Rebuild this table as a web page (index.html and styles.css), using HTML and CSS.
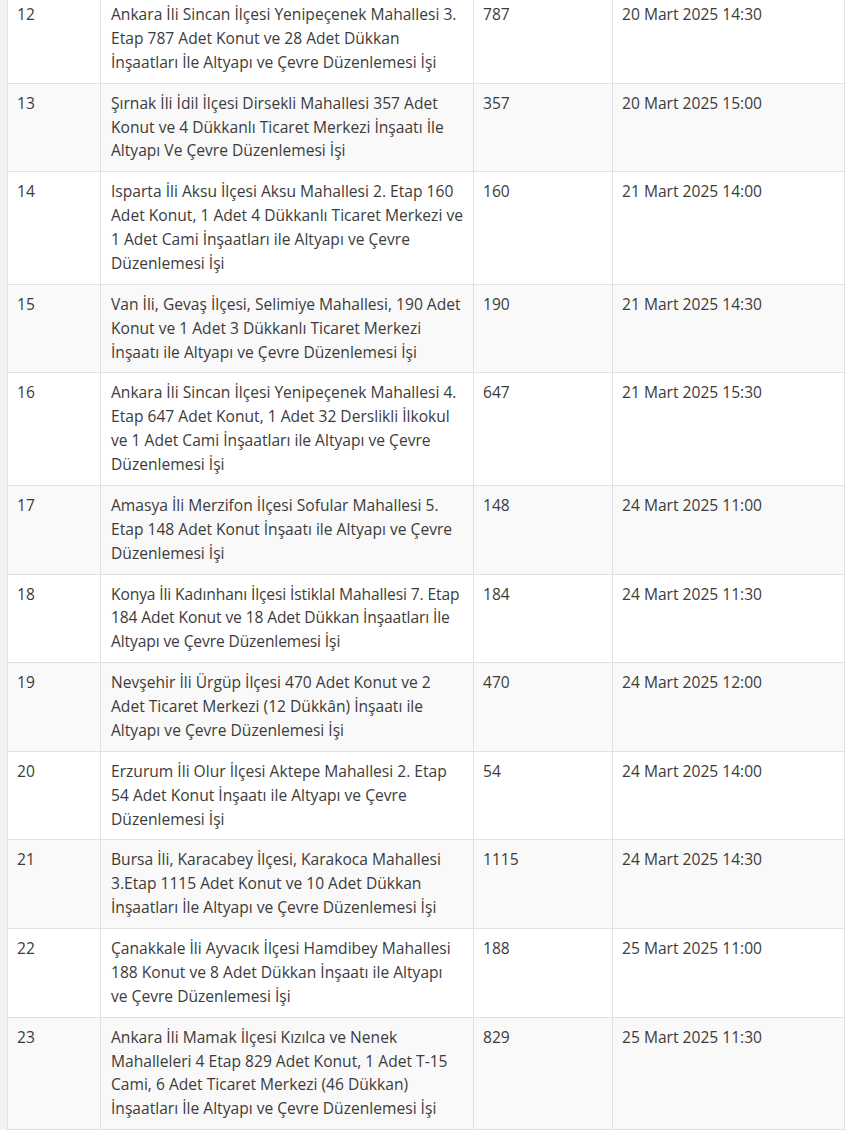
FILE: index.html
```html
<!DOCTYPE html>
<html lang="tr">
<head>
<meta charset="utf-8">
<title>İhale Listesi</title>
<link rel="stylesheet" href="styles.css">
</head>
<body>
<div class="page">
  <div class="gutter"></div>
  <table class="tenders">
    <colgroup>
      <col class="c-no"><col class="c-name"><col class="c-qty"><col class="c-date">
    </colgroup>
    <tbody>
      <tr><td>12</td><td>Ankara İli Sincan İlçesi Yenipeçenek Mahallesi 3. Etap 787 Adet Konut ve 28 Adet Dükkan İnşaatları İle Altyapı ve Çevre Düzenlemesi İşi</td><td>787</td><td>20 Mart 2025 14:30</td></tr>
      <tr><td>13</td><td>Şırnak İli İdil İlçesi Dirsekli Mahallesi 357 Adet Konut ve 4 Dükkanlı Ticaret Merkezi İnşaatı İle Altyapı Ve Çevre Düzenlemesi İşi</td><td>357</td><td>20 Mart 2025 15:00</td></tr>
      <tr><td>14</td><td>Isparta İli Aksu İlçesi Aksu Mahallesi 2. Etap 160 Adet Konut, 1 Adet 4 Dükkanlı Ticaret Merkezi ve 1 Adet Cami İnşaatları ile Altyapı ve Çevre Düzenlemesi İşi</td><td>160</td><td>21 Mart 2025 14:00</td></tr>
      <tr><td>15</td><td>Van İli, Gevaş İlçesi, Selimiye Mahallesi, 190 Adet Konut ve 1 Adet 3 Dükkanlı Ticaret Merkezi İnşaatı ile Altyapı ve Çevre Düzenlemesi İşi</td><td>190</td><td>21 Mart 2025 14:30</td></tr>
      <tr><td>16</td><td>Ankara İli Sincan İlçesi Yenipeçenek Mahallesi 4. Etap 647 Adet Konut, 1 Adet 32 Derslikli İlkokul ve 1 Adet Cami İnşaatları ile Altyapı ve Çevre Düzenlemesi İşi</td><td>647</td><td>21 Mart 2025 15:30</td></tr>
      <tr><td>17</td><td>Amasya İli Merzifon İlçesi Sofular Mahallesi 5. Etap 148 Adet Konut İnşaatı ile Altyapı ve Çevre Düzenlemesi İşi</td><td>148</td><td>24 Mart 2025 11:00</td></tr>
      <tr><td>18</td><td class="snug">Konya İli Kadınhanı İlçesi İstiklal Mahallesi 7. Etap 184 Adet Konut ve 18 Adet Dükkan İnşaatları İle Altyapı ve Çevre Düzenlemesi İşi</td><td>184</td><td>24 Mart 2025 11:30</td></tr>
      <tr><td>19</td><td>Nevşehir İli Ürgüp İlçesi 470 Adet Konut ve 2 Adet Ticaret Merkezi (12 Dükkân) İnşaatı ile Altyapı ve Çevre Düzenlemesi İşi</td><td>470</td><td>24 Mart 2025 12:00</td></tr>
      <tr><td>20</td><td>Erzurum İli Olur İlçesi Aktepe Mahallesi 2. Etap 54 Adet Konut İnşaatı ile Altyapı ve Çevre Düzenlemesi İşi</td><td>54</td><td>24 Mart 2025 14:00</td></tr>
      <tr><td>21</td><td>Bursa İli, Karacabey İlçesi, Karakoca Mahallesi 3.Etap 1115 Adet Konut ve 10 Adet Dükkan İnşaatları İle Altyapı ve Çevre Düzenlemesi İşi</td><td>1115</td><td>24 Mart 2025 14:30</td></tr>
      <tr><td>22</td><td>Çanakkale İli Ayvacık İlçesi Hamdibey Mahallesi 188 Konut ve 8 Adet Dükkan İnşaatı ile Altyapı ve&nbsp;Çevre Düzenlemesi İşi</td><td>188</td><td>25 Mart 2025 11:00</td></tr>
      <tr><td>23</td><td>Ankara İli Mamak İlçesi Kızılca ve Nenek Mahalleleri 4 Etap 829 Adet Konut, 1 Adet T-15 Cami, 6 Adet Ticaret Merkezi (46 Dükkan) İnşaatları İle Altyapı ve Çevre Düzenlemesi İşi</td><td>829</td><td>25 Mart 2025 11:30</td></tr>
    </tbody>
  </table>
</div>
</body>
</html>
```

FILE: styles.css
```css
html, body {
  margin: 0;
  padding: 0;
  background: #ffffff;
}

.page {
  display: flex;
  align-items: flex-start;
  margin-top: -6px;
}

.gutter {
  width: 7px;
  flex: 0 0 7px;
  align-self: stretch;
  background: #f3f3f4;
}

.tenders {
  width: 837px;
  border-collapse: collapse;
  table-layout: fixed;
  font-family: "Open Sans", "Liberation Sans", sans-serif;
  font-size: 15.6px;
  line-height: 23.875px;
  color: #3c3c3c;
}

.c-no { width: 93px; }
.c-name { width: 373px; }
.c-qty { width: 139px; }
.c-date { width: 232px; }

.tenders td {
  border: 1px solid #e1e1e1;
  padding: 8px 9px;
  vertical-align: top;
}

.tenders td:nth-child(2) {
  padding-left: 10px;
}

.tenders td.snug {
  letter-spacing: -0.12px;
}

.tenders tr:nth-child(even) td {
  background: #f9f9f9;
}
```
